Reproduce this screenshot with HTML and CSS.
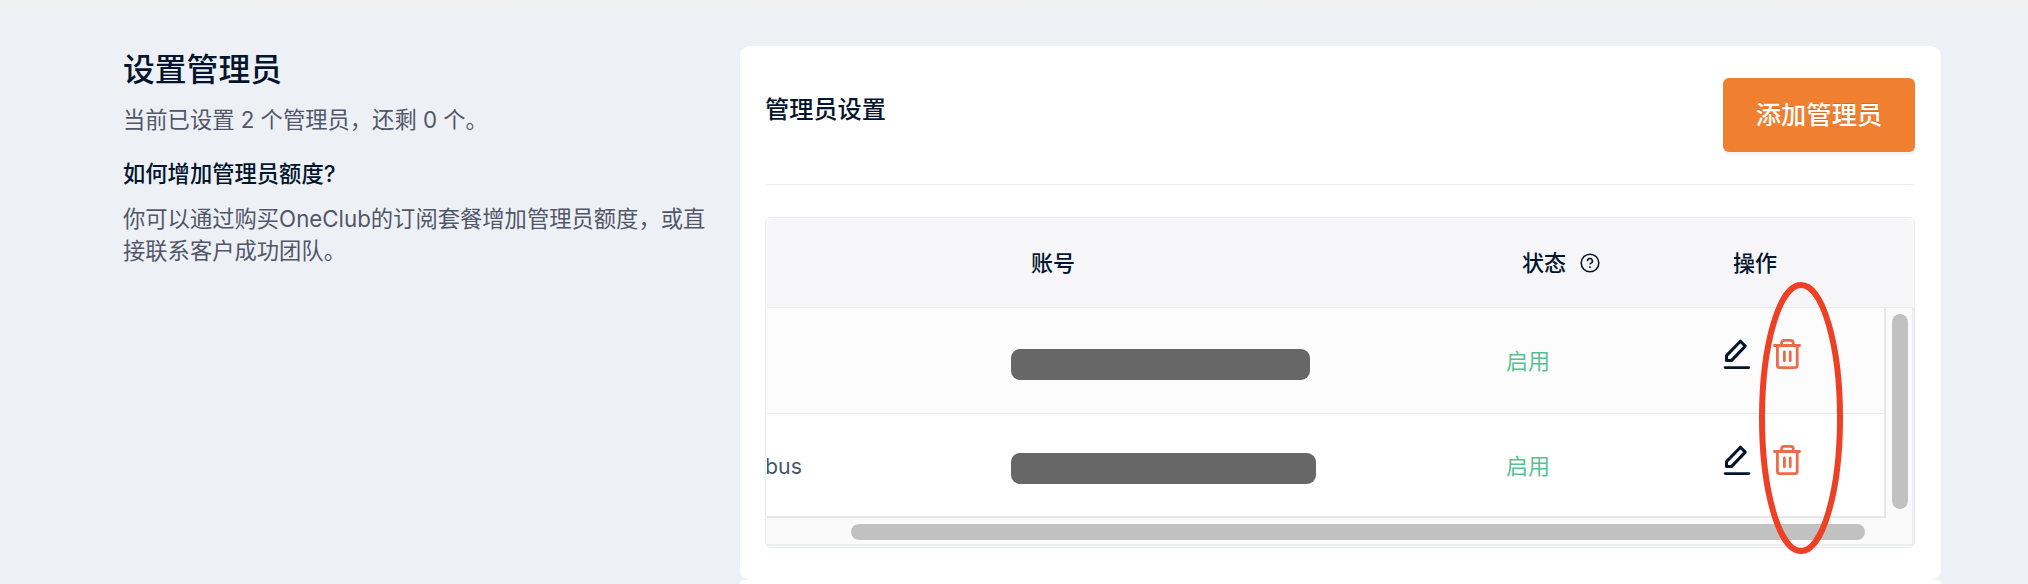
FILE: index.html
```html
<!DOCTYPE html>
<html lang="zh-CN">
<head>
<meta charset="utf-8">
<title>设置管理员</title>
<link rel="stylesheet" href="styles.css">
</head>
<body>
<svg class="defs" aria-hidden="true">
  <symbol id="edit" viewBox="0 0 30 34">
    <path d="M4.5 18.6 18.4 4.2 23.3 9.1 9.4 23.6H4.5Z" fill="none" stroke="currentColor" stroke-width="3" stroke-linejoin="round"/>
    <path d="M3.2 30.6H26.8" fill="none" stroke="currentColor" stroke-width="2.8" stroke-linecap="round"/>
  </symbol>
  <symbol id="trash" viewBox="0 0 30 34">
    <path d="M2.4 8.5H27.6M5.4 8.5V28.2Q5.4 30.6 7.8 30.6H22.8Q25.2 30.6 25.2 28.2V8.5M9.6 8.5V5.8Q9.6 3.4 12 3.4H18.8Q21.2 3.4 21.2 5.8V8.5M12.4 15V23.8M18.2 15V23.8" fill="none" stroke="currentColor" stroke-width="2.8" stroke-linecap="round" stroke-linejoin="round"/>
  </symbol>
</svg>
<main class="page">
  <aside class="intro">
    <h1 class="intro-title">设置管理员</h1>
    <p class="intro-text">当前已设置 2 个管理员，还剩 0 个。</p>
    <h2 class="intro-question">如何增加管理员额度?</h2>
    <p class="intro-text">你可以通过购买OneClub的订阅套餐增加管理员额度，或直接联系客户成功团队。</p>
  </aside>
  <div class="cards">
    <section class="card">
      <header class="card-header">
        <h2 class="card-title">管理员设置</h2>
        <button class="add-button">添加管理员</button>
      </header>
      <div class="table">
        <div class="row head">
          <div></div>
          <div class="account-head">账号</div>
          <div class="status-head">状态
            <svg class="help" viewBox="0 0 20 20"><circle cx="10" cy="10" r="8.8"/><path d="M7.6 8.2A2.4 2.4 0 1 1 11 10.1Q10 10.6 10 11.6"/><circle class="dot" cx="10" cy="14" r=".9"/></svg>
          </div>
          <div class="action-head">操作</div>
        </div>
        <div class="viewport">
          <div class="rows">
            <div class="row first">
              <div></div>
              <div><span class="mask"></span></div>
              <div class="enabled">启用</div>
              <div class="actions"><svg class="edit"><use href="#edit"/></svg><svg class="trash"><use href="#trash"/></svg></div>
            </div>
            <div class="row second">
              <div class="name">bus</div>
              <div><span class="mask wide"></span></div>
              <div class="enabled">启用</div>
              <div class="actions"><svg class="edit"><use href="#edit"/></svg><svg class="trash"><use href="#trash"/></svg></div>
            </div>
          </div>
          <div class="track-y"><div class="thumb-y"></div></div>
          <div class="track-x"><div class="thumb-x"></div></div>
        </div>
      </div>
      <svg class="highlight" viewBox="0 0 84 272"><ellipse cx="42" cy="136" rx="39" ry="133"/></svg>
    </section>
    <section class="card next"></section>
  </div>
</main>
</body>
</html>
```
FILE: styles.css
```css
* { box-sizing: border-box; }
body {
  margin: 0;
  height: 584px;
  overflow: hidden;
  background: linear-gradient(#f0f0f0 0, #edf1f3 10px, #edf1f6 22px);
  color: #03152d;
  font-family: Inter, "Noto Sans CJK SC", sans-serif;
  font-size: 22px;
}
h1, h2, p { margin: 0; font-weight: 500; }
.defs { position: absolute; width: 0; height: 0; }
.page {
  display: grid;
  grid-template-columns: 584px 1201px;
  column-gap: 32px;
  padding: 46px 0 0 124px;
}
.intro { padding-top: 2px; margin-left: -1px; }
.intro-title { font-size: 31.8px; line-height: 44px; }
.intro-text {
  font-size: 22.3px;
  line-height: 32.5px;
  font-weight: 400;
  color: #515669;
}
.intro-title + .intro-text { margin-top: 12px; }
.intro-question { font-size: 22.3px; line-height: 32px; margin: 21px 0 13px; }
.card {
  position: relative;
  height: 534px;
  padding: 32px 26px 0 25px;
  border-radius: 10px;
  background: #fff;
}
.card.next { height: 4px; padding: 0; border-radius: 10px 10px 0 0; }
.card-header {
  display: flex;
  justify-content: space-between;
  height: 107px;
  border-bottom: 1px solid #ebeef3;
}
.card-title { font-size: 24.2px; line-height: 36px; margin-top: 14px; }
.add-button {
  width: 192px;
  height: 74px;
  padding: 0;
  border: 0;
  border-radius: 6px;
  background: #f08030;
  box-shadow: 0 3px 0 rgba(0, 0, 0, .045);
  color: #fff;
  font: 500 25.3px/74px Inter, "Noto Sans CJK SC", sans-serif;
  text-shadow: 0 -1px 0 rgba(0, 0, 0, .12);
}
.table {
  width: 1150px;
  height: 331px;
  margin-top: 32px;
  padding: 1px;
  border: 1px solid #e6eaf2;
  border-radius: 6px;
  overflow: hidden;
}
.row {
  display: grid;
  grid-template-columns: 244px 496px 217px 1fr;
  align-items: center;
  border-bottom: 1px solid #e6eaf2;
}
.head {
  height: 89px;
  background: #f6f6f9;
  border-radius: 5px 5px 0 0;
  font-weight: 500;
  line-height: 32px;
}
.account-head { padding-left: 20px; }
.status-head { display: flex; align-items: center; gap: 14px; padding-left: 15px; }
.help { width: 20px; height: 20px; fill: none; stroke: #03152d; stroke-width: 1.6; }
.help .dot { fill: #03152d; stroke: none; }
.action-head { padding-left: 9px; }
.viewport {
  display: grid;
  grid-template: 210px 28px / 1119px 28px;
  background: #fafafa;
}
.rows { border: solid #e6e6e6; border-width: 0 2px 2px 0; overflow: hidden; }
.first { height: 106px; background: #fcfcfc; }
.second { height: 103px; background: #fff; border: 0; }
.name { margin-left: -2px; color: #4a5568; font-size: 21.3px; line-height: 32px; }
.mask {
  display: block;
  width: 299px;
  height: 31px;
  margin-top: 7px;
  border-radius: 9px;
  background: #676767;
}
.mask.wide { width: 305px; margin-top: 5px; }
.enabled { margin-left: -1px; color: #5bc091; line-height: 32px; font-weight: 400; }
.actions { display: flex; align-items: flex-start; gap: 20px; align-self: start; margin-left: -2px; padding-top: 29px; }
.actions svg { width: 30px; height: 34px; flex: none; }
.edit { color: #03152d; }
.trash { color: #eb6b4b; }
.track-y { border-right: 2px solid #eceef1; padding: 6px 0 0 6px; }
.thumb-y { width: 16px; height: 195px; border-radius: 8px; background: #c1c1c1; }
.track-x {
  grid-column: 1 / 3;
  padding: 6px 0 0 84px;
  border: solid #eceeef;
  border-width: 0 2px 2px 0;
}
.thumb-x { width: 1014px; height: 16px; border-radius: 8px; background: #c1c1c1; }
.highlight {
  position: absolute;
  left: 1019px;
  top: 236px;
  width: 84px;
  height: 272px;
  fill: none;
  stroke: #ee4025;
  stroke-width: 6;
}
```
